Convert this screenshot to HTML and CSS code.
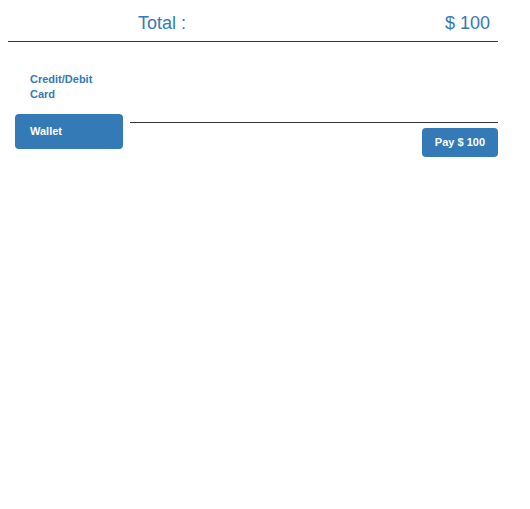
FILE: index.html
```html
<!DOCTYPE html>
<html>
<head>
<meta charset="utf-8">
<link rel="stylesheet" href="styles.css">
</head>
<body>
<div class="page">
  <div class="total-row">
    <span class="total-label">Total :</span>
    <span class="total-value">$ 100</span>
  </div>
  <hr class="rule">
  <div class="payment">
    <ul class="pills">
      <li class="pill"><a href="#">Credit/Debit Card</a></li>
      <li class="pill active"><a href="#">Wallet</a></li>
    </ul>
    <div class="panel">
      <hr class="rule panel-rule">
      <div class="actions">
        <button class="pay-btn">Pay $ 100</button>
      </div>
    </div>
  </div>
</div>
</body>
</html>
```

FILE: styles.css
```css
html, body {
  margin: 0;
  padding: 0;
  background: #fff;
}
body {
  font-family: "Liberation Sans", Arial, sans-serif;
}
.page {
  margin: 0 32px 0 8px;
}
.total-row {
  display: flex;
  justify-content: space-between;
  padding: 13px 8px 0 130px;
  font-size: 18px;
  line-height: 20px;
  color: #337ab7;
}
.rule {
  margin: 8px 0 0 0;
  border: 0;
  border-top: 1px solid #333;
  height: 0;
}
.payment {
  display: flex;
  margin-top: 20px;
  gap: 7px;
}
.pills {
  list-style: none;
  margin: 0 0 0 7px;
  padding: 0;
  width: 108px;
  flex: none;
}
.pill + .pill {
  margin-top: 2px;
}
.pill a {
  display: block;
  padding: 10px 15px;
  font-size: 11px;
  font-weight: bold;
  line-height: 15px;
  color: #337ab7;
  text-decoration: none;
  border-radius: 4px;
}
.pill.active a {
  background: #337ab7;
  color: #fff;
}
.panel {
  flex: 1;
}
.panel-rule {
  margin-top: 60px;
}
.actions {
  display: flex;
  justify-content: flex-end;
  margin-top: 5px;
}
.pay-btn {
  font-family: "Liberation Sans", Arial, sans-serif;
  font-size: 11px;
  font-weight: bold;
  line-height: 15px;
  padding: 7px 13px;
  color: #fff;
  background: #337ab7;
  border: 0;
  border-radius: 4px;
}
```
